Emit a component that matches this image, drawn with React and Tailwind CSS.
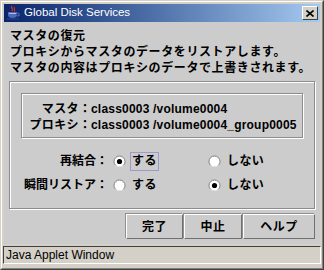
import React from 'react';

const jp = { fontFamily: '"Liberation Sans", "Noto Sans CJK JP", sans-serif' };

function JavaIcon() {
    return (
        <svg width="16" height="16" viewBox="0 0 16 16">
            <path d="M7 1 C5 3 9 4 7 6" stroke="#e0301e" strokeWidth="1.3" fill="none" />
            <path d="M9.5 2 C8 4 11 4.5 9 6.5" stroke="#e0301e" strokeWidth="1.1" fill="none" />
            <path d="M3 7 H12 V10 C12 12 10 13 7.5 13 C5 13 3 12 3 10 Z" fill="#5068b8" />
            <path d="M12 8 C15 8 15 11 12 11" stroke="#5068b8" strokeWidth="1.2" fill="none" />
            <path d="M1.5 14 H14" stroke="#2a3c8c" strokeWidth="1.4" />
            <path d="M4 8.5 H11" stroke="#c8d4f0" strokeWidth="0.8" />
        </svg>
    );
}

function Radio({ checked }) {
    return (
        <svg width="13" height="13" viewBox="0 0 13 13" className="shrink-0">
            <circle cx="6.5" cy="6.5" r="5.5" fill="#ffffff" stroke="#808080" strokeWidth="1" />
            <path d="M2.6 10.4 A5.5 5.5 0 0 0 10.4 10.4" stroke="#ffffff" strokeWidth="1" fill="none" />
            {checked && <circle cx="6.5" cy="6.5" r="2.6" fill="#000000" />}
        </svg>
    );
}

function Option({ checked, label, focused }) {
    return (
        <div className="flex items-center gap-[4px]">
            <Radio checked={checked} />
            <span className={`h-[19px] px-[1px] flex items-center border tracking-[0.4px] ${focused ? 'border-[#9a9acc]' : 'border-transparent'}`}>
                {label}
            </span>
        </div>
    );
}

function Btn({ w, children }) {
    return (
        <button
            className={`${w} h-[25px] bg-[#cccccc] border border-t-white border-l-white border-r-[#707070] border-b-[#707070] shadow-[-1px_-1px_0_#909090] text-[12px] font-bold text-black flex items-center justify-center tracking-[0.5px]`}
            style={jp}
        >
            {children}
        </button>
    );
}

export default function App() {
    return (
        <div className="w-[324px] h-[270px] bg-[#d4d0c8] border border-t-[#d4d0c8] border-l-[#d4d0c8] border-r-[#404040] border-b-[#404040]">
            <div className="h-full border border-t-white border-l-white border-r-[#808080] border-b-[#808080] p-[2px] flex flex-col">
                {/* title bar */}
                <div className="h-[18px] flex items-center bg-gradient-to-r from-[#0a246a] to-[#a6caf0] pl-[1px] pr-[2px]">
                    <JavaIcon />
                    <span className="ml-[3px] text-[11.5px] text-white" style={{ fontFamily: '"Liberation Sans", sans-serif' }}>
                        Global Disk Services
                    </span>
                    <div className="ml-auto w-[16px] h-[14px] bg-[#d4d0c8] border border-t-white border-l-white border-r-[#404040] border-b-[#404040] flex items-center justify-center">
                        <svg width="8" height="7" viewBox="0 0 8 7">
                            <path d="M0.5 0.5 L7.5 6.5 M7.5 0.5 L0.5 6.5" stroke="#000" strokeWidth="1.6" />
                        </svg>
                    </div>
                </div>

                {/* content */}
                <div className="h-[222px] bg-[#cccccc] pt-[6px] flex flex-col text-black" style={jp}>
                    <div className="pl-[6px] text-[12px] leading-[16px] font-bold tracking-[0.6px]">
                        <div>マスタの復元</div>
                        <div>プロキシからマスタのデータをリストアします。</div>
                        <div>マスタの内容はプロキシのデータで上書きされます。</div>
                    </div>

                    <div className="mx-[5px] mt-[5px] h-[128px] border border-[#8c8c8c] shadow-[inset_1px_1px_0_#fff,1px_1px_0_#fff] pt-[11px] px-[11px]">
                        <div className="h-[45px] border border-[#8c8c8c] shadow-[inset_1px_1px_0_#fff,1px_1px_0_#fff] pt-[7px] text-[12px] leading-[16px] font-bold">
                            <div className="flex">
                                <span className="w-[57px] text-right tracking-[0.4px]">マスタ</span>
                                <span className="w-[12px] text-center">：</span>
                                <span className="tracking-[0.2px]">class0003 /volume0004</span>
                            </div>
                            <div className="flex">
                                <span className="w-[57px] text-right tracking-[0.4px]">プロキシ</span>
                                <span className="w-[12px] text-center">：</span>
                                <span className="tracking-[0.2px]">class0003 /volume0004_group0005</span>
                            </div>
                        </div>

                        <div className="mt-[11px] text-[12px] font-bold">
                            <div className="h-[24px] flex items-center">
                                <span className="w-[87px] text-right">再結合：</span>
                                <div className="ml-[5px] w-[95px]">
                                    <Option checked label="する" focused />
                                </div>
                                <Option label="しない" />
                            </div>
                            <div className="h-[24px] flex items-center">
                                <span className="w-[87px] text-right">瞬間リストア：</span>
                                <div className="ml-[5px] w-[95px]">
                                    <Option label="する" />
                                </div>
                                <Option checked label="しない" />
                            </div>
                        </div>
                    </div>

                    <div className="mt-[5px] mr-[5px] flex justify-end gap-[1px]">
                        <Btn w="w-[57px]">完了</Btn>
                        <Btn w="w-[58px]">中止</Btn>
                        <Btn w="w-[72px]">ヘルプ</Btn>
                    </div>
                </div>

                {/* applet status */}
                <div className="mt-[2px] mx-[-1px] h-[18px] bg-[#d4d0c8] border border-t-[#404040] border-l-[#404040] border-r-white border-b-white flex items-center pl-[2px] text-[12px] text-black" style={{ fontFamily: '"Liberation Sans", sans-serif' }}>
                    Java Applet Window
                </div>
            </div>
        </div>
    );
}
